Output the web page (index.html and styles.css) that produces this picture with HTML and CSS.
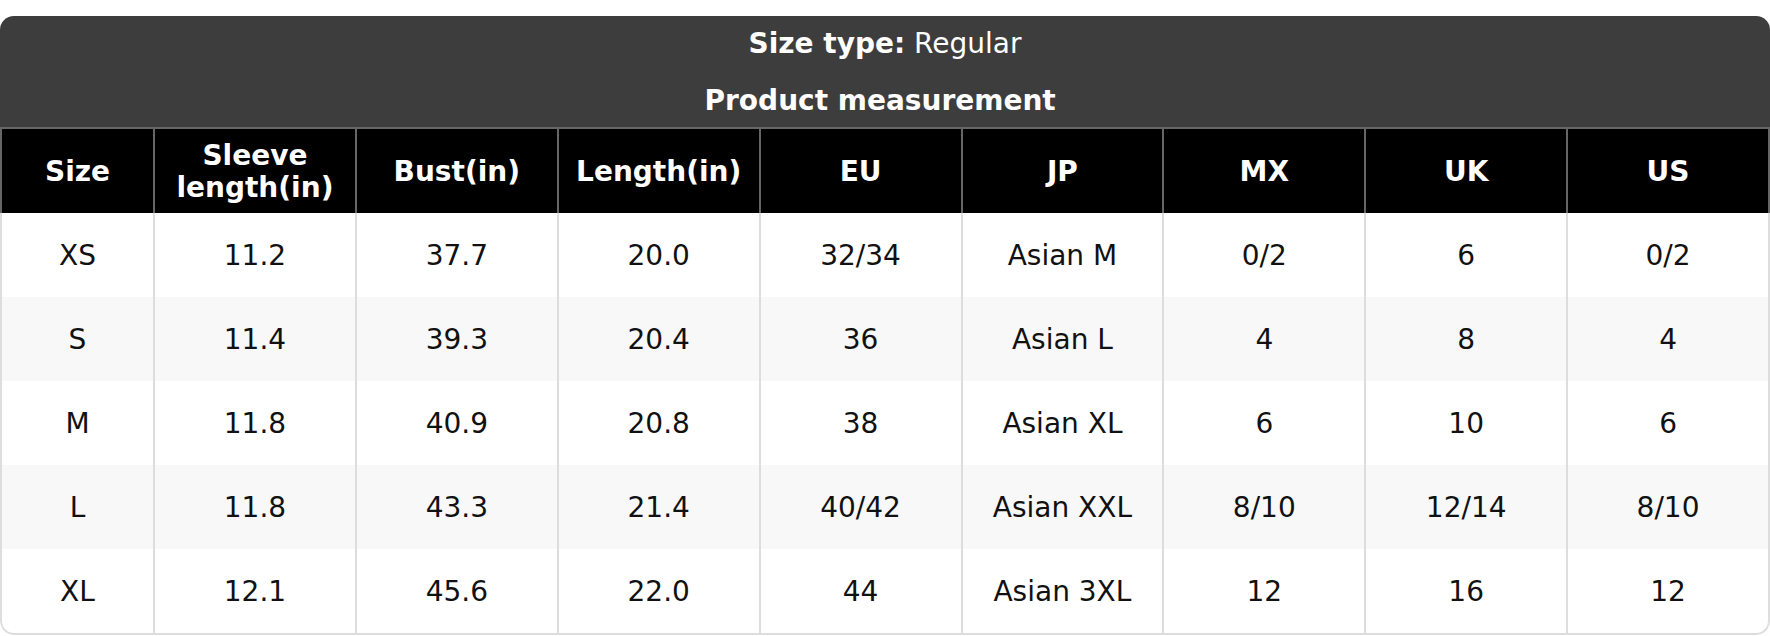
FILE: index.html
```html
<!DOCTYPE html>
<html lang="en">
<head>
<meta charset="utf-8">
<title>Size chart</title>
<link rel="stylesheet" href="styles.css">
</head>
<body>
<div class="card">
  <div class="title-block">
    <div class="title-line"><strong>Size type:</strong> Regular</div>
    <div class="title-line second"><strong>Product measurement&nbsp;</strong></div>
  </div>
  <table class="chart">
    <colgroup>
      <col class="col-size">
      <col><col><col><col><col><col><col><col>
    </colgroup>
    <thead>
      <tr>
        <th>Size</th>
        <th>Sleeve length(in)</th>
        <th>Bust(in)</th>
        <th>Length(in)</th>
        <th>EU</th>
        <th>JP</th>
        <th>MX</th>
        <th>UK</th>
        <th>US</th>
      </tr>
    </thead>
    <tbody>
      <tr><td>XS</td><td>11.2</td><td>37.7</td><td>20.0</td><td>32/34</td><td>Asian M</td><td>0/2</td><td>6</td><td>0/2</td></tr>
      <tr><td>S</td><td>11.4</td><td>39.3</td><td>20.4</td><td>36</td><td>Asian L</td><td>4</td><td>8</td><td>4</td></tr>
      <tr><td>M</td><td>11.8</td><td>40.9</td><td>20.8</td><td>38</td><td>Asian XL</td><td>6</td><td>10</td><td>6</td></tr>
      <tr><td>L</td><td>11.8</td><td>43.3</td><td>21.4</td><td>40/42</td><td>Asian XXL</td><td>8/10</td><td>12/14</td><td>8/10</td></tr>
      <tr><td>XL</td><td>12.1</td><td>45.6</td><td>22.0</td><td>44</td><td>Asian 3XL</td><td>12</td><td>16</td><td>12</td></tr>
    </tbody>
  </table>
</div>
</body>
</html>
```
FILE: styles.css
```css
html, body {
  margin: 0;
  padding: 0;
  background: #ffffff;
}
body {
  padding-top: 16px;
  font-family: "DejaVu Sans", Verdana, sans-serif;
  font-size: 28px;
  color: #111111;
}
.card {
  width: 1770px;
  border-radius: 14px;
  overflow: hidden;
  background: #ffffff;
}
.title-block {
  background: #3d3d3d;
  color: #ffffff;
  text-align: center;
}
.title-line {
  padding: 11px 0 11px;
  line-height: 33px;
}
.title-line.second {
  padding: 13px 0 10px;
}
.title-line strong {
  font-weight: bold;
}
.chart {
  width: 1770px;
  border-collapse: separate;
  border-spacing: 0;
  table-layout: fixed;
}
.col-size {
  width: 155px;
}
.chart th {
  background: #000000;
  color: #ffffff;
  font-weight: bold;
  height: 82px;
  padding: 2px 12px 0;
  line-height: 32px;
  text-align: center;
  vertical-align: middle;
  border-top: 2px solid #666666;
  border-right: 2px solid #666666;
}
.chart th:first-child {
  border-left: 2px solid #666666;
}
.chart td {
  height: 84px;
  padding: 0 8px;
  text-align: center;
  vertical-align: middle;
  border-right: 2px solid #dddddd;
}
.chart td:first-child {
  border-left: 2px solid #dddddd;
}
.chart tbody tr:nth-child(even) td {
  background: #f8f8f8;
}
.chart tbody tr:last-child td {
  border-bottom: 2px solid #dddddd;
}
.chart tbody tr:last-child td:first-child {
  border-bottom-left-radius: 14px;
}
.chart tbody tr:last-child td:last-child {
  border-bottom-right-radius: 14px;
}
```
